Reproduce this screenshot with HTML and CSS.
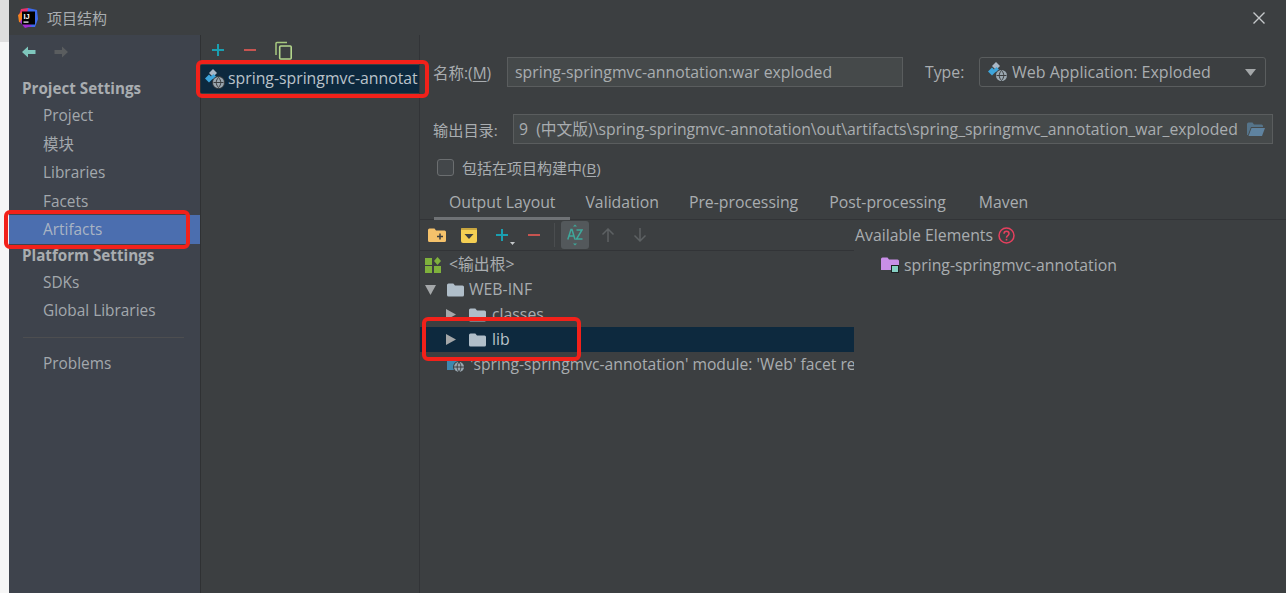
FILE: index.html
```html
<!DOCTYPE html>
<html lang="zh">
<head>
<meta charset="utf-8">
<title>项目结构</title>
<link rel="stylesheet" href="styles.css">
</head>
<body>
<svg width="0" height="0" class="defs">
  <defs>
    <symbol id="folder" viewBox="0 0 18 15"><path d="M1 3a1.500 1.500 0 0 1 1.500-1.500h4.800l1.700 2h7.500A1.500 1.500 0 0 1 18 5v8a1.500 1.500 0 0 1-1.500 1.500h-14A1.500 1.500 0 0 1 1 13z" fill="#b0bec9"/></symbol>
    <symbol id="web" viewBox="0 0 20 20">
      <path d="M8 0l4 4-4 4-4-4z" fill="#a9b7c6"/>
      <path d="M4 5.500L0 9.500l4 4 4-4z" fill="#3da5dc"/>
      <path d="M8.500 5L5.500 8l3 3 3-3z" fill="#3da5dc"/>
      <circle cx="13.500" cy="13.500" r="6.500" fill="#3c3f41"/>
      <circle cx="13.500" cy="13.500" r="5.500" fill="#9aa7b0"/>
      <path d="M8.500 13.500h10M13.500 8.500c-3 3-3 7 0 10M13.500 8.500c3 3 3 7 0 10" stroke="#3c3f41" stroke-width="1" fill="none"/>
    </symbol>
  </defs>
</svg>
<div class="window">
  <header class="titlebar">
    <div class="title-group">
      <svg class="app-logo" width="20" height="20" viewBox="0 0 20 20">
        <path d="M3 1l7-1 3 4-9 9-3-6z" fill="#e8336f"/>
        <path d="M10 0l9 2 1 9-3 8-10 0z" fill="#3d6bf0"/>
        <path d="M0 7l4-3v11l-3-1z" fill="#f58220"/>
        <path d="M2 14l5 6 7-2-10-7z" fill="#a12bd0"/>
        <rect x="4" y="3.500" width="13" height="13" fill="#000"/>
        <rect x="5.500" y="13.500" width="5" height="1.200" fill="#fff"/>
        <text x="5.500" y="11" class="logo-text">IJ</text>
      </svg>
      <span class="title-text">项目结构</span>
    </div>
    <svg class="close" width="14" height="14" viewBox="0 0 14 14"><path d="M1.500 1.500l11 11M12.500 1.500l-11 11" stroke="#c5c8ca" stroke-width="1.400"/></svg>
  </header>
  <div class="body-row">
    <aside class="sidebar">
      <div class="nav-arrows">
        <svg width="14" height="12" viewBox="0 0 14 12"><path d="M0 6l6-5.500V4h7.500v4H6v3.500z" fill="#7fc7bd"/></svg>
        <svg width="14" height="12" viewBox="0 0 14 12"><path d="M14 6L8 .5V4H.5v4H8v3.500z" fill="#5a5d5f"/></svg>
      </div>
      <div class="group-title first">Project Settings</div>
      <div class="nav-item">Project</div>
      <div class="nav-item">模块</div>
      <div class="nav-item">Libraries</div>
      <div class="nav-item">Facets</div>
      <div class="nav-item active">Artifacts</div>
      <div class="group-title">Platform Settings</div>
      <div class="nav-item">SDKs</div>
      <div class="nav-item">Global Libraries</div>
      <div class="nav-sep"></div>
      <div class="nav-item">Problems</div>
    </aside>
    <section class="list-pane">
      <div class="list-tools">
        <svg width="14" height="14" viewBox="0 0 14 14"><path d="M7 1v12M1 7h12" stroke="#1a9fb0" stroke-width="2"/></svg>
        <svg width="14" height="14" viewBox="0 0 14 14"><path d="M1 7h12" stroke="#c75450" stroke-width="2"/></svg>
        <svg width="18" height="19" viewBox="0 0 18 19"><path d="M12 1.500H2a1 1 0 0 0-1 1V14" fill="none" stroke="#a7c97f" stroke-width="1.500"/><rect x="4.700" y="5" width="11.500" height="13" rx="1" fill="none" stroke="#b4d68c" stroke-width="1.600"/></svg>
      </div>
      <div class="list-row">
        <svg class="web-icon" width="20" height="20"><use href="#web"/></svg>
        <span class="list-label">spring-springmvc-annotat</span>
      </div>
    </section>
    <main class="detail">
      <div class="form-row name-row">
        <label class="field-label name-label">名称:(<u>M</u>)</label>
        <div class="input name-input">spring-springmvc-annotation:war exploded</div>
        <label class="field-label type-label">Type:</label>
        <div class="select">
          <svg class="web-icon small" width="20" height="20"><use href="#web"/></svg>
          <span class="select-text">Web Application: Exploded</span>
          <svg class="caret" width="11" height="7" viewBox="0 0 11 7"><path d="M0 0h11L5.500 7z" fill="#a4a7a9"/></svg>
        </div>
      </div>
      <div class="form-row dir-row">
        <label class="field-label dir-label">输出目录:</label>
        <div class="input dir-input">
          <span class="dir-text">9&nbsp; (中文版)\spring-springmvc-annotation\out\artifacts\spring_springmvc_annotation_war_exploded</span>
          <svg class="open-folder" width="18" height="14" viewBox="0 0 18 14"><path d="M0 2a1.500 1.500 0 0 1 1.500-1.500h4l1.500 2h7.500A1.500 1.500 0 0 1 16 4v1H4L1 13H0z" fill="#55748a"/><path d="M4.500 6H18l-3 8H1.500z" fill="#5f83a0"/></svg>
        </div>
      </div>
      <div class="check-row">
        <span class="checkbox"></span>
        <span class="check-label">包括在项目构建中(<u>B</u>)</span>
      </div>
      <nav class="tabs">
        <span class="tab current">Output Layout</span>
        <span class="tab">Validation</span>
        <span class="tab">Pre-processing</span>
        <span class="tab post">Post-processing</span>
        <span class="tab maven">Maven</span>
      </nav>
      <div class="layout-split">
        <div class="output-pane">
          <div class="tree-tools">
            <svg width="18" height="14" viewBox="0 0 18 14"><path d="M0 2A1.500 1.500 0 0 1 1.500.5h5l1.500 2h8.500A1.500 1.500 0 0 1 18 4v8.500a1.500 1.500 0 0 1-1.500 1.500h-15A1.500 1.500 0 0 1 0 12.500z" fill="#f5c26b"/><path d="M12 5.500v6M9 8.500h6" stroke="#3c3f41" stroke-width="1.500"/></svg>
            <svg width="16" height="15" viewBox="0 0 16 15"><rect width="16" height="15" rx="2" fill="#f4cf53"/><rect y="0" width="16" height="2" rx="1" fill="#c9a63f"/><path d="M3.500 6h9L8 11z" fill="#3c3f41"/></svg>
            <span class="add-wrap">
              <svg width="14" height="14" viewBox="0 0 14 14"><path d="M7 1v12M1 7h12" stroke="#1a9fb0" stroke-width="2"/></svg>
              <svg class="add-caret" width="5" height="3" viewBox="0 0 5 3"><path d="M0 0h5L2.500 3z" fill="#c5c8ca"/></svg>
            </span>
            <svg width="14" height="14" viewBox="0 0 14 14"><path d="M1 7h12" stroke="#c75450" stroke-width="2"/></svg>
            <span class="tool-sep"></span>
            <span class="sort-btn">
              <svg width="16" height="22" viewBox="0 0 16 22"><path d="M6 2.500L8 .5l2 2zM6 19.500l2 2 2-2z" fill="#3fa79b"/><path d="M.8 15.500L4 5.500h1l3 10M2 12h5M9.500 6h5.500L9.500 15h6" fill="none" stroke="#3fa79b" stroke-width="1.500"/></svg>
            </span>
            <svg class="arrow-dim" width="14" height="14" viewBox="0 0 14 14"><path d="M7 14V1M1.500 6.500L7 1l5.500 5.500" fill="none" stroke="#5d6163" stroke-width="1.500"/></svg>
            <svg class="arrow-dim" width="14" height="14" viewBox="0 0 14 14"><path d="M7 0v13M1.500 7.500L7 13l5.500-5.500" fill="none" stroke="#5d6163" stroke-width="1.500"/></svg>
          </div>
          <div class="tree">
            <div class="tree-row depth-0">
              <svg width="16" height="16" viewBox="0 0 16 16"><rect y="1" width="7" height="7" fill="#7fb13c"/><rect y="9" width="7" height="7" fill="#7fb13c"/><rect x="9" y="9" width="7" height="7" fill="#7fb13c"/><path d="M12.500 0l3.500 4-3.500 4L9 4z" fill="#7fb13c"/></svg>
              <span class="tree-label root-label">&lt;输出根&gt;</span>
            </div>
            <div class="tree-row depth-1">
              <svg class="twisty" width="12" height="10" viewBox="0 0 12 10"><path d="M0 0h11L5.500 10z" fill="#a4a7a9"/></svg>
              <svg class="tree-folder" width="18" height="15"><use href="#folder"/></svg>
              <span class="tree-label">WEB-INF</span>
            </div>
            <div class="tree-row depth-2">
              <svg class="twisty" width="10" height="11" viewBox="0 0 10 11"><path d="M0 0v11l10-5.500z" fill="#a4a7a9"/></svg>
              <svg class="tree-folder" width="18" height="15"><use href="#folder"/></svg>
              <span class="tree-label">classes</span>
            </div>
            <div class="tree-row depth-2 selected">
              <svg class="twisty" width="10" height="11" viewBox="0 0 10 11"><path d="M0 0v11l10-5.500z" fill="#a4a7a9"/></svg>
              <svg class="tree-folder" width="18" height="15"><use href="#folder"/></svg>
              <span class="tree-label">lib</span>
            </div>
            <div class="tree-row depth-3">
              <svg class="facet" width="18" height="17" viewBox="0 0 18 17"><rect y="1" width="12" height="13" fill="#3f87ad"/><circle cx="12" cy="11" r="6" fill="#3c3f41"/><circle cx="12" cy="11" r="5" fill="#9aa7b0"/><path d="M7 11h10M12 6c-2.500 3-2.500 7 0 10M12 6c2.500 3 2.500 7 0 10" stroke="#3c3f41" fill="none"/></svg>
              <span class="tree-label facet-label">'spring-springmvc-annotation' module: 'Web' facet re</span>
            </div>
          </div>
        </div>
        <div class="available">
          <div class="available-head">
            <span>Available Elements</span>
            <svg width="17" height="17" viewBox="0 0 17 17"><circle cx="8.500" cy="8.500" r="7.500" fill="none" stroke="#e5405e" stroke-width="1.500"/><path d="M6 6.700c0-3.200 5-3.200 5 0 0 2-2.500 1.800-2.500 4" fill="none" stroke="#e5405e" stroke-width="1.500"/><rect x="7.700" y="11.800" width="1.600" height="1.700" fill="#e5405e"/></svg>
          </div>
          <div class="available-row">
            <svg width="18" height="16" viewBox="0 0 18 16"><path d="M0 2a1.500 1.500 0 0 1 1.500-1.500h5l1.500 2h8.500A1.500 1.500 0 0 1 18 4v9H0z" fill="#c98fe8"/><rect x="10.500" y="8.500" width="7" height="7" fill="#86d0c4" stroke="#1d2021"/></svg>
            <span>spring-springmvc-annotation</span>
          </div>
        </div>
      </div>
    </main>
  </div>
</div>
<div class="mark mark-list"></div>
<div class="mark mark-artifacts"></div>
<div class="mark mark-lib"></div>
</body>
</html>
```
FILE: styles.css
```css
* { box-sizing: border-box; }
html, body { height: 100%; }
body {
  margin: 0;
  background: linear-gradient(#dedede 0 42px, #f6f6f6 42px);
  overflow: hidden;
  position: relative;
  font-family: "Open Sans", "Noto Sans CJK SC", sans-serif;
  font-size: 15.800px;
  color: #a9adb0;
}
u { text-underline-offset: 2px; }
.defs { position: absolute; }
.window {
  margin-left: 9px;
  height: 593px;
  background: #3c3f41;
  display: flex;
  flex-direction: column;
}
.titlebar {
  height: 35px;
  flex: none;
  display: flex;
  align-items: center;
  justify-content: space-between;
  padding: 0 20px 0 9px;
}
.title-group { display: flex; align-items: center; gap: 9px; }
.logo-text { font: 700 7.500px "Liberation Sans", sans-serif; fill: #fff; }
.title-text { font-size: 15px; color: #a9adb0; }
.body-row { flex: 1; display: flex; min-height: 0; }

.sidebar {
  width: 192px;
  flex: none;
  background: #3e434c;
  border-right: 1px solid #2f3133;
  font-size: 15.400px;
}
.nav-arrows { height: 35px; display: flex; align-items: center; gap: 18px; padding: 0 0 1px 13px; }
.group-title {
  height: 24px;
  line-height: 23px;
  padding-left: 13px;
  font-size: 15.200px;
  font-weight: 700;
  color: #a9adb0;
}
.group-title.first { height: 31px; line-height: 36px; }
.nav-item { height: 28.500px; line-height: 30px; padding-left: 34px; color: #a3a8ad; }
.nav-item.active { background: #4b6eaf; color: #a9b4c4; }
.nav-sep { height: 1px; margin: 12px 16px 11px 14px; background: #4d4e50; }

.list-pane {
  width: 219px;
  flex: none;
  border-right: 1px solid #323437;
  overflow: hidden;
}
.list-tools { height: 30px; display: flex; align-items: center; gap: 18px; padding: 0 0 0 10px; }
.list-row {
  height: 28px;
  background: #0d293e;
  display: flex;
  align-items: center;
  gap: 3px;
  padding-left: 4px;
  white-space: nowrap;
  overflow: hidden;
  color: #bbc3ca;
}
.list-label { padding-bottom: 2px; }
.web-icon { flex: none; }

.detail { flex: 1; min-width: 0; display: flex; flex-direction: column; }
.form-row { display: flex; align-items: center; }
.name-row { height: 30px; margin-top: 22px; padding-left: 13px; }
.field-label { flex: none; white-space: nowrap; color: #a9adb0; }
.name-label { width: 74px; font-size: 15.500px; }
.input {
  background: #45494a;
  border: 1px solid #5a5d5e;
  height: 30px;
  line-height: 28px;
  padding: 0 7px;
  white-space: nowrap;
  overflow: hidden;
}
.name-input { width: 396px; flex: none; }
.type-label { margin-left: 22px; width: 54px; }
.select {
  width: 287px;
  height: 30px;
  border: 1px solid #5a5d5e;
  border-radius: 3px;
  display: flex;
  align-items: center;
  padding: 0 9px 0 8px;
  gap: 4px;
  font-size: 16px;
}
.select-text { flex: 1; }
.dir-row { height: 30px; margin-top: 27px; padding-left: 13px; }
.dir-label { width: 80px; font-size: 15.200px; }
.dir-input { width: 760px; flex: none; display: flex; align-items: center; padding: 0 7px 0 5px; justify-content: space-between; font-size: 15.750px; }
.dir-text { overflow: hidden; }
.open-folder { flex: none; }
.check-row { display: flex; align-items: center; gap: 8px; height: 20px; margin-top: 13px; padding-left: 17px; }
.checkbox { width: 17px; height: 17px; border: 1px solid #6b6e70; border-radius: 3px; background: #43474a; }
.check-label { font-size: 15px; }
.tabs {
  display: flex;
  height: 36px;
  margin-top: 7px;
  padding-left: 14px;
  align-items: stretch;
  border-bottom: 1px solid #323437;
  flex: none;
}
.tab { padding: 7px 15px 0; line-height: 22px; }
.tab.current { box-shadow: inset 0 -3px 0 #6f7275; margin-bottom: -1px; }
.tab.post { margin-left: 1px; }
.tab.maven { margin-left: 3px; }
.layout-split { flex: 1; display: flex; min-height: 0; }
.output-pane { width: 434px; flex: none; overflow: hidden; }
.tree-tools { height: 31px; display: flex; align-items: center; padding-left: 8px; border-bottom: 1px solid #323437; }
.tree-tools > svg:nth-child(2) { margin-left: 15px; }
.add-wrap { display: flex; align-items: flex-end; margin-left: 18px; }
.add-caret { margin: 0 -5px -3px 1px; }
.add-wrap + svg { margin-left: 17px; }
.tool-sep { width: 1px; height: 24px; background: #4a4d4f; margin: 0 6px 0 13px; }
.sort-btn { width: 28px; height: 28px; background: #53585b; border-radius: 3px; display: flex; align-items: center; justify-content: center; }
.arrow-dim { margin-left: 12px; }
.arrow-dim + .arrow-dim { margin-left: 18px; }
.tree { padding-top: 1px; }
.tree-row { height: 25px; display: flex; align-items: center; white-space: nowrap; }
.tree-label { padding-bottom: 2px; }
.depth-0 { padding-left: 5px; }
.depth-1 { padding-left: 5px; }
.depth-2 { padding-left: 26px; }
.depth-3 { padding-left: 27px; }
.twisty { margin-right: 12px; flex: none; }
.depth-1 .twisty { margin-right: 9px; }
.tree-folder { margin-right: 5px; flex: none; }
.depth-2 .tree-folder { margin-right: 6px; }
.root-label { margin-left: 8px; }
.facet { flex: none; margin-right: 5px; }
.facet-label { font-size: 15.700px; }
.tree-row.selected { background: #0d293e; color: #bbc3ca; }
.available { flex: 1; padding-left: 1px; }
.available-head { height: 30px; display: flex; align-items: center; gap: 5px; }
.available-row { display: flex; align-items: center; gap: 5px; height: 30px; padding-left: 26px; }

.mark {
  position: absolute;
  border: 4px solid #f2211a;
  border-radius: 6px;
  pointer-events: none;
}
.mark-list { left: 196px; top: 60px; width: 233px; height: 38px; }
.mark-artifacts { left: 4px; top: 210px; width: 186px; height: 39px; }
.mark-lib { left: 422px; top: 317px; width: 159px; height: 44px; }
```
